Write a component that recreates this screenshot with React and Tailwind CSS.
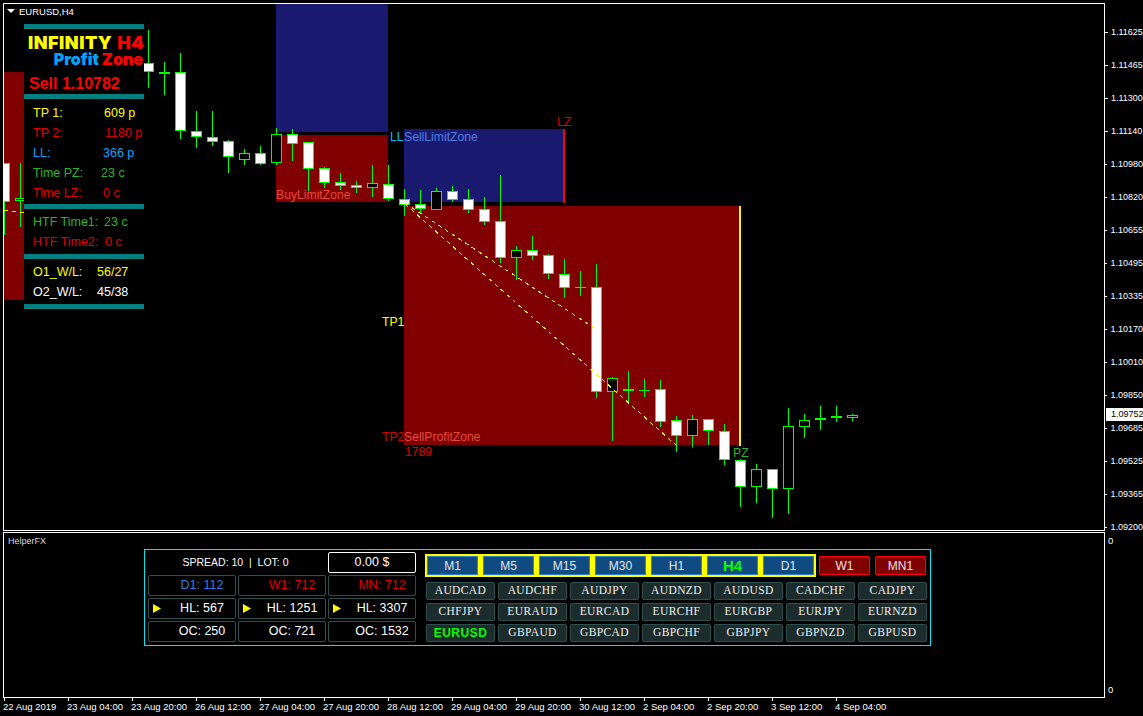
const candles = [
  [4, 163, 235, 163, 202, 'w'], [20, 163, 227, 198, 201, 'b'],
  [148, 30, 88, 63, 72, 'w'], [164, 62, 95, 72, 74, 'd'], [180, 53, 139, 72, 131, 'w'],
  [196, 111, 148, 131, 137, 'w'], [212, 111, 146, 137, 142, 'w'], [228, 140, 173, 141, 157, 'w'],
  [244, 149, 165, 153, 160, 'b'], [260, 146, 165, 153, 164, 'w'], [276, 128, 165, 134, 163, 'b'],
  [292, 129, 161, 134, 144, 'w'], [308, 142, 191, 142, 169, 'w'], [324, 167, 188, 168, 183, 'w'],
  [340, 173, 190, 182, 186, 'w'], [356, 181, 193, 185, 188, 'w'], [372, 165, 197, 183, 188, 'b'],
  [388, 165, 201, 184, 199, 'w'], [404, 189, 216, 199, 205, 'w'], [420, 190, 213, 204, 209, 'w'],
  [436, 188, 210, 191, 210, 'b'], [452, 186, 202, 191, 200, 'w'], [468, 189, 213, 199, 210, 'w'],
  [484, 197, 225, 209, 222, 'w'], [500, 175, 263, 221, 258, 'w'], [516, 246, 280, 250, 258, 'b'],
  [532, 236, 260, 250, 256, 'w'], [548, 254, 279, 255, 274, 'w'], [564, 259, 298, 274, 288, 'w'],
  [580, 271, 296, 287, 288, 'd'], [596, 264, 398, 287, 392, 'w'], [612, 377, 441, 378, 392, 'b'],
  [628, 371, 402, 389, 391, 'd'], [644, 379, 397, 390, 391, 'd'], [660, 380, 427, 389, 422, 'w'],
  [676, 416, 452, 420, 436, 'w'], [692, 415, 447, 419, 436, 'b'], [708, 419, 445, 419, 431, 'w'],
  [724, 424, 465, 431, 460, 'w'], [740, 459, 507, 460, 487, 'w'], [756, 464, 503, 469, 487, 'b'],
  [772, 469, 518, 469, 489, 'w'], [788, 408, 514, 426, 489, 'b'], [804, 414, 438, 420, 427, 'b'],
  [820, 406, 430, 418, 420, 'd'], [836, 406, 422, 416, 418, 'd'], [852, 414, 421, 415, 418, 'b'],
]

const prices = ['1.11625', '1.11465', '1.11300', '1.11140', '1.10980', '1.10820', '1.10655', '1.10495', '1.10335', '1.10170', '1.10010', '1.09850', '1.09685', '1.09525', '1.09365', '1.09200']
const times = ['22 Aug 2019', '23 Aug 04:00', '23 Aug 20:00', '26 Aug 12:00', '27 Aug 04:00', '27 Aug 20:00', '28 Aug 12:00', '29 Aug 04:00', '29 Aug 20:00', '30 Aug 12:00', '2 Sep 04:00', '2 Sep 20:00', '3 Sep 12:00', '4 Sep 04:00']
const timeframes = ['M1', 'M5', 'M15', 'M30', 'H1', 'H4', 'D1']
const symbols = ['AUDCAD', 'AUDCHF', 'AUDJPY', 'AUDNZD', 'AUDUSD', 'CADCHF', 'CADJPY', 'CHFJPY', 'EURAUD', 'EURCAD', 'EURCHF', 'EURGBP', 'EURJPY', 'EURNZD', 'EURUSD', 'GBPAUD', 'GBPCAD', 'GBPCHF', 'GBPJPY', 'GBPNZD', 'GBPUSD']

const Candle = ({ c }) => {
  const [x, hi, lo, top, bottom, kind] = c
  return (
    <g shapeRendering="crispEdges">
      <rect x={x} y={hi} width="1" height={lo - hi} fill="#00ff00" />
      <rect x={x - 5} y={top} width="11" height={bottom - top} fill="#00ff00" />
      {kind !== 'd' && bottom - top > 2 && (
        <rect x={x - 4} y={top + 1} width="9" height={bottom - top - 2} fill={kind === 'w' ? '#ffffff' : '#000000'} />
      )}
    </g>
  )
}

const ChartDrawing = () => (
  <svg className="absolute inset-0 block" width="1100" height="526" viewBox="4 4 1100 526">
    <g shapeRendering="crispEdges">
      <rect x="4" y="72" width="20" height="228" fill="#800000" />
      <rect x="276" y="4" width="112" height="128" fill="#191970" />
      <rect x="276" y="135" width="112" height="67" fill="#800000" />
      <rect x="404" y="129" width="160" height="73" fill="#191970" />
      <rect x="404" y="206" width="336" height="239" fill="#800000" />
      <rect x="563" y="129" width="2" height="74" fill="#ff0000" />
      <rect x="739" y="206" width="2" height="240" fill="#ffff00" />
    </g>
    {candles.map((c) => <Candle key={c[0]} c={c} />)}
    <g stroke="#ffff00" strokeWidth="1" strokeDasharray="4 4" fill="none" shapeRendering="crispEdges">
      <line x1="405" y1="203" x2="594" y2="328" />
      <line x1="405" y1="204" x2="677" y2="446" />
      <line x1="4" y1="210" x2="24" y2="213" />
    </g>
  </svg>
)

const rows1 = [
  { label: 'TP 1:', value: '609 p', cls: 'text-[#ffff00]', ml: 'left-[80px]' },
  { label: 'TP 2:', value: '1180 p', cls: 'text-[#e00000]', ml: 'left-[81px]' },
  { label: 'LL:', value: '366 p', cls: 'text-[#00a5ff]', ml: 'left-[79px]' },
  { label: 'Time PZ:', value: '23 c', cls: 'text-[#2cb52c]', ml: 'left-[77px]' },
  { label: 'Time LZ:', value: '0 c', cls: 'text-[#e00000]', ml: 'left-[79px]' },
]
const rows2 = [
  { label: 'HTF Time1:', value: '23 c', cls: 'text-[#2cb52c]', ml: 'left-[80px]' },
  { label: 'HTF Time2:', value: '0 c', cls: 'text-[#e00000]', ml: 'left-[81px]' },
]
const rows3 = [
  { label: 'O1_W/L:', value: '56/27', cls: 'text-[#ffff00]', ml: 'left-[73px]' },
  { label: 'O2_W/L:', value: '45/38', cls: 'text-white', ml: 'left-[73px]' },
]

const InfoRow = ({ r }) => (
  <div className={`relative h-5 pl-[9px] flex items-center text-[12.5px] ${r.cls}`}>
    <span>{r.label}</span>
    <span className={`absolute ${r.ml}`}>{r.value}</span>
  </div>
)

const Bar = () => <div className="h-[5px] bg-[#008080]" />

const InfoPanel = () => (
  <div className="absolute left-[20px] top-[20px] w-[120px] bg-black">
    <Bar />
    <div className="h-[45px] flex flex-col font-['Inter',sans-serif] font-black">
      <div className="mt-[5px] pl-[4px] h-[17px] text-[18px] leading-[17px] tracking-[0.5px] whitespace-nowrap">
        <span className="text-[#ffff00]">INFINITY</span>
        <span className="text-[#ff0000] ml-[5px]">H4</span>
      </div>
      <div className="h-[16px] self-end pr-px text-[16px] leading-[16px] whitespace-nowrap">
        <span className="text-[#00a5ff]">Profit</span>
        <span className="text-[#ff0000] ml-[3px]">Zone</span>
      </div>
    </div>
    <div className="h-5 pl-[5px] flex items-center text-[16px] font-bold text-[#ff0000]">Sell 1.10782</div>
    <Bar />
    <div className="pt-[4px] pb-px">
      {rows1.map((r) => <InfoRow key={r.label} r={r} />)}
    </div>
    <Bar />
    <div className="pt-[3px] pb-[2px]">
      {rows2.map((r) => <InfoRow key={r.label} r={r} />)}
    </div>
    <Bar />
    <div className="pt-[3px] pb-[2px]">
      {rows3.map((r) => <InfoRow key={r.label} r={r} />)}
    </div>
    <Bar />
  </div>
)

const ChartLabels = () => (
  <>
    <span className="absolute left-[553px] top-[112px] text-[12.2px] text-[#e00000]">LZ</span>
    <span className="absolute left-[386px] top-[127px] text-[12.2px] text-[#00bfff]">LL</span>
    <span className="absolute left-[400px] top-[127px] text-[12.2px] text-[#4f7fe0]">SellLimitZone</span>
    <span className="absolute left-[272px] top-[185px] text-[12.2px] text-[#e84a3a]">BuyLimitZone</span>
    <span className="absolute left-[378px] top-[312px] text-[12.2px] text-[#ffff00]">TP1</span>
    <span className="absolute left-[378px] top-[427px] text-[12.2px] text-[#e00000]">TP2</span>
    <span className="absolute left-[400px] top-[427px] text-[12.2px] text-[#e84a3a]">SellProfitZone</span>
    <span className="absolute left-[401px] top-[442px] text-[12.2px] text-[#e00000]">1789</span>
    <span className="absolute left-[729px] top-[443px] text-[12.2px] text-[#2cb52c]">PZ</span>
  </>
)

const Triangle = () => (
  <svg className="absolute left-[4px] top-[5px]" width="9" height="9" viewBox="0 0 9 9">
    <polygon points="0,0 8,4.5 0,9" fill="#ffff00" />
  </svg>
)

const cellCls = 'relative h-[21px] flex items-center justify-center pl-5 rounded-[2px] border border-[#2f4f4f] text-[12.5px]'

const HelperPanel = () => (
  <div className="ml-[140px] w-[787px] h-[97px] border border-[#00e5ee] flex">
    <div className="ml-[3px] mt-[2px] grid grid-cols-[88px_88px_88px] grid-rows-[21px_21px_21px_21px] gap-[2px]">
      <div className="col-span-2 flex items-center justify-center pr-[3px] text-[10.5px] text-white whitespace-pre">SPREAD: 10  |  LOT: 0</div>
      <div className="flex items-center justify-center rounded-[2px] border border-white text-[12.5px] text-white">0.00 $</div>
      <div className={`${cellCls} text-[#2f7fe0]`}>D1: 112</div>
      <div className={`${cellCls} text-[#e00000]`}>W1: 712</div>
      <div className={`${cellCls} text-[#e00000]`}>MN: 712</div>
      <div className={`${cellCls} text-white`}><Triangle />HL: 567</div>
      <div className={`${cellCls} text-white`}><Triangle />HL: 1251</div>
      <div className={`${cellCls} text-white`}><Triangle />HL: 3307</div>
      <div className={`${cellCls} text-white`}>OC: 250</div>
      <div className={`${cellCls} text-white`}>OC: 721</div>
      <div className={`${cellCls} text-white`}>OC: 1532</div>
    </div>
    <div className="ml-[9px] mt-[4px] flex flex-col">
      <div className="flex gap-[3px] h-[23px]">
        <div className="w-[391px] p-[2px] flex gap-[5px] bg-[#ffff00]">
          {timeframes.map((t) => (
            <div
              key={t}
              className={`w-[51px] h-[19px] flex items-center justify-center border border-[#2e7fbf] bg-[#0f4a80] ${t === 'H4' ? 'text-[15px] font-bold text-[#00ff00]' : 'text-[12px] text-[#e6e6e6]'}`}
            >
              {t}
            </div>
          ))}
        </div>
        <div className="pt-[2px] flex gap-[5px]">
          {['W1', 'MN1'].map((t) => (
            <div key={t} className="w-[51px] h-[19px] flex items-center justify-center rounded-[1px] border border-[#ff0000] bg-[#800000] text-[12px] text-[#e6e6e6]">{t}</div>
          ))}
        </div>
      </div>
      <div className="mt-[5px] grid grid-cols-[69px_69px_69px_69px_69px_69px_69px] auto-rows-[18px] gap-[3px] ml-px">
        {symbols.map((s) => (
          <div
            key={s}
            className={`flex items-center justify-center rounded-[2px] border border-[#2f4f4f] bg-[#1c2b2b] ${s === 'EURUSD' ? "font-['Liberation_Sans',sans-serif] text-[12px] font-bold tracking-[0.5px] text-[#00ff00]" : "font-['Liberation_Serif',serif] text-[11.5px] tracking-[0.4px] text-[#eef2f2]"}`}
          >
            {s}
          </div>
        ))}
      </div>
    </div>
  </div>
)

export default function App() {
  return (
    <div className="relative w-[1143px] h-[716px] overflow-hidden bg-black pt-[3px] font-['Liberation_Sans',sans-serif] leading-none">
      <div className="flex h-[528px]">
        <div className="relative ml-[3px] w-[1102px] h-[528px] overflow-hidden border border-white">
          <ChartDrawing />
          <span className="absolute left-[15px] top-[3px] text-[9.5px] text-white">EURUSD,H4</span>
          <svg className="absolute left-[3px] top-[5px]" width="8" height="5" viewBox="0 0 8 5">
            <polygon points="0,0 8,0 4,4" fill="#ffffff" />
          </svg>
          <ChartLabels />
          <InfoPanel />
        </div>
        <div className="relative w-[38px] pt-[13px] text-[9px] text-white">
          {prices.map((p) => (
            <div key={p} className="h-[33px] flex items-center">
              <div className="w-[3px] h-px bg-white" />
              <span className="ml-[3px]">{p}</span>
            </div>
          ))}
          <div className="absolute left-[1px] top-[405px] w-[37px] h-[13px] pl-[5px] flex items-center bg-white text-black">1.09752</div>
        </div>
      </div>
      <div className="mt-px flex">
        <div className="ml-[3px] w-[1102px] h-[166px] border border-white">
          <div className="h-4 pl-[4px] flex items-center text-[9px] text-[#d8d8d8]">HelperFX</div>
          <HelperPanel />
        </div>
        <div className="w-[38px] h-[166px] pt-[2px] pb-[3px] flex flex-col justify-between text-[9.5px] text-white">
          <span className="ml-[3px] mt-[2px]">0</span>
          <span className="ml-[3px] mb-px">0</span>
        </div>
      </div>
      <div className="ml-[4px] flex text-[9.5px] text-white">
        {times.map((t) => (
          <div key={t} className="w-16 shrink-0">
            <div className="w-px h-[3px] bg-white" />
            <div className="-ml-px mt-px whitespace-nowrap">{t}</div>
          </div>
        ))}
      </div>
    </div>
  )
}
